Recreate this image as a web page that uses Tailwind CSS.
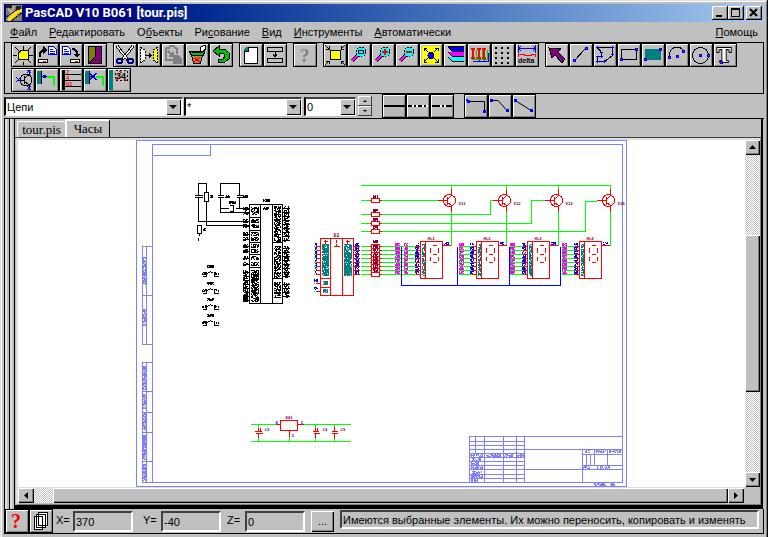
<!DOCTYPE html>
<html lang="ru">
<head>
<meta charset="utf-8">
<title>PasCAD V10 B061 [tour.pis]</title>
<script src="https://cdn.jsdelivr.net/npm/@tailwindcss/browser@4"></script>
</head>
<body class="bg-[#c0c0c0] text-black">
<div class="min-h-screen flex flex-col bg-[#c0c0c0] p-1 pb-[5px] font-['Liberation_Sans',Arial,sans-serif] text-[11px] shadow-[inset_-1px_-1px_0_#000,inset_1px_1px_0_#dfdfdf,inset_-2px_-2px_0_#808080,inset_2px_2px_0_#fff]">

  <!-- Title bar -->
  <header class="flex items-center h-[18px] pl-[2px] pr-[2px] bg-linear-to-r from-[#000080] from-15% to-[#a6caf0] text-white">
    <svg class="size-4 shrink-0" viewBox="0 0 16 16" shape-rendering="crispEdges"><rect width="16" height="16" fill="#808060"/><path d="M0 0h6v3H0zM10 1h5v4h-5z" fill="#222"/><path d="M2 4l10 9M8 1L3 14" stroke="#b0b0b0" stroke-width="2"/><path d="M0 15L11 5l5-1v3l-4 1-8 8z" fill="#ffe000"/><path d="M0 12L14 3M5 16l11-8" stroke="#222"/></svg>
    <h1 class="ml-[3px] font-bold text-[13px] leading-4 font-['Roboto','Liberation_Sans',sans-serif]">PasCAD V10 B061 [tour.pis]</h1>
    <div class="ml-auto flex *:w-4 *:h-[14px] *:bg-[#c0c0c0] *:shadow-[inset_-1px_-1px_0_#000,inset_1px_1px_0_#fff,inset_-2px_-2px_0_#808080]">
      <button aria-label="Свернуть"><svg viewBox="0 0 16 14" shape-rendering="crispEdges"><path d="M4 9h6v2H4z"/></svg></button>
      <button aria-label="Развернуть"><svg viewBox="0 0 16 14" shape-rendering="crispEdges"><path d="M3 2h9v9H3zM4 4v6h7V4z" fill-rule="evenodd"/></svg></button>
      <button aria-label="Закрыть" class="ml-[2px]"><svg viewBox="0 0 16 14"><path d="M4 3l7 7M11 3l-7 7" stroke="#000" stroke-width="2"/></svg></button>
    </div>
  </header>

  <!-- Menu -->
  <nav class="flex h-5 items-center gap-3 px-[6px] leading-5">
    <a href="#"><u>Ф</u>айл</a>
    <a href="#"><u>Р</u>едактировать</a>
    <a href="#">О<u>б</u>ъекты</a>
    <a href="#">Ри<u>с</u>ование</a>
    <a href="#"><u>В</u>ид</a>
    <a href="#"><u>И</u>нструменты</a>
    <a href="#"><u>А</u>втоматически</a>
    <a href="#" class="ml-auto"><u>П</u>омощь</a>
  </nav>

  <!-- Toolbars -->
  <div class="border border-black pl-[6px] pb-px min-h-[51px] flex flex-col gap-px [&_button]:block [&_button]:size-6 [&_button]:border [&_button]:border-black [&_button]:shadow-[inset_1px_1px_0_#fff,inset_-1px_-1px_0_#808080] [&_svg]:size-[22px] [&_svg]:[shape-rendering:crispEdges]">
    <div class="flex flex-wrap gap-x-[6px]">
      <div class="flex">
        <button aria-label="Новый"><svg viewBox="1 1 22 22"><path d="M12 3v4M12 19v3M2 12h4M18 12h4M4 4l4 4M20 4l-3 3M4 20l3-3M20 20l-3-3" stroke="#000"/><path d="M10 7.500h7v9H7.500V10z" fill="#ff0" stroke="#000"/></svg></button>
        <button aria-label="Открыть"><svg viewBox="1 1 22 22"><path d="M5 14V10L8 7h2" fill="none" stroke="#000" stroke-width="2"/><path d="M8 3l4 4-4 4z"/><path d="M13.500 3.500h5l3 3v5h-8z" fill="#fff" stroke="#00f"/><path d="M15 6.500h3M15 8.500h5M15 10.500h5" stroke="#00f"/><path d="M3.500 16.500h9v3h-9z" fill="#fff" stroke="#000"/><path d="M8 18.500h3" stroke="red" stroke-width="1"/></svg></button>
        <button aria-label="Сохранить"><svg viewBox="1 1 22 22"><path d="M3.500 3.500h5l3 3v5h-8z" fill="#fff" stroke="#00f"/><path d="M5 6.500h3M5 8.500h5M5 10.500h5" stroke="#00f"/><path d="M13 6h2l3 3v3" fill="none" stroke="#000" stroke-width="2"/><path d="M14 11h7l-3 4z"/><path d="M11.500 16.500h9v3h-9z" fill="#fff" stroke="#000"/><path d="M16 18.500h3" stroke="red" stroke-width="1"/></svg></button>
        <button aria-label="Выход"><svg viewBox="1 1 22 22"><path d="M5.500 3.500h13v17h-13z" fill="#800080" stroke="#000"/><path d="M6 4h6v10l-6 6z" fill="#808000"/><path d="M12 4v10l-6 6" fill="none" stroke="#000"/></svg></button>
      </div>
      <div class="flex">
        <button aria-label="Вырезать"><svg viewBox="1 1 22 22"><path d="M4 3l11 14M20 3L9 17" stroke="#000" stroke-width="3"/><path d="M4 3l10 13M20 3L10 16" stroke="#fff" stroke-width="1.200"/><circle cx="6.500" cy="18" r="2.500" fill="none" stroke="#000080" stroke-width="2"/><circle cx="17.500" cy="18" r="2.500" fill="none" stroke="#000080" stroke-width="2"/></svg></button>
        <button aria-label="Зеркально"><svg viewBox="1 1 22 22"><path d="M3.500 4.500L8 7v10l-4.500 3z" fill="#fff" stroke="#000" stroke-dasharray="2 1"/><path d="M20.500 4.500L16 7v10l4.500 3z" fill="#ff0" stroke="#000" stroke-dasharray="2 1"/><path d="M9 12.500h4" stroke="#000"/><path d="M12 10l3 2.500-3 2.500z"/></svg></button>
        <button aria-label="Вставить"><svg viewBox="1 1 22 22"><path d="M5 5v12h7M16 5v6M5 5h3l1-2h4l1 2h2" fill="none" stroke="#808080" stroke-width="2"/><path d="M12 12h5l4 4v5h-9z" fill="#808080"/><path d="M7 8l5 5M12 9v4H8" stroke="#808080" stroke-width="1.500" fill="none"/></svg></button>
        <button aria-label="Удалить"><svg viewBox="1 1 22 22"><path d="M6.500 12h11l-2 8h-7z" fill="#c08040" stroke="#000"/><path d="M9 15l6 4M15 14l-6 5" stroke="red"/><path d="M4.500 8.500h15l-1 4h-12z" fill="#00c000" stroke="#000"/><path d="M7 9h10" stroke="#000" stroke-width="2"/><path d="M15 7l1-3 4-2 1 4-4 3z" fill="#fff" stroke="#000"/></svg></button>
        <button aria-label="Отменить"><svg viewBox="1 1 22 22"><path d="M4 8l6-5v3h6l4 4v6l-4 3H9v-3h5l2-3-1-2-2-1h-3v3z" fill="#00c000" stroke="#000"/></svg></button>
      </div>
      <div class="flex">
        <button aria-label="Лист"><svg viewBox="1 1 22 22"><path d="M9 4.500h9.500v16h-13V8z" fill="#fff" stroke="#000"/><path d="M5 8V6l3-2h2v4z" fill="#008080"/><path d="M5 8.500h4.500V4" fill="none" stroke="#000"/></svg></button>
        <button aria-label="Разместить"><svg viewBox="1 1 22 22" fill="none" stroke="#000"><path d="M4.500 4.500h15v4h-15zM4.500 15.500h15v4h-15zM12 9v5M10 11.500l2 2 2-2"/></svg></button>
      </div>
      <button aria-label="Справка"><svg viewBox="1 1 22 22"><text x="7" y="19" font-family="Liberation Serif" font-weight="bold" font-size="19" fill="#808080">?</text></svg></button>
      <div class="flex">
        <button aria-label="Выделить область"><svg viewBox="1 1 22 22"><path d="M7.500 7.500h10v9h-10z" fill="#ff0" stroke="#000"/><path d="M2 2l4 4M22 2l-4 4M2 22l4-4M22 22l-4-4M6 3v3H3M18 3v3h3M3 18h3v3M21 18h-3v3" stroke="#000" fill="none"/></svg></button>
        <button aria-label="Масштаб окном"><svg viewBox="1 1 22 22"><path d="M5 18l5-5" stroke="#000" stroke-width="4"/><path d="M5 18l5-5" stroke="#f0f" stroke-width="2.500"/><circle cx="14" cy="9" r="5" fill="#0ff" stroke="#000" stroke-dasharray="2 1"/><path d="M11.500 7.500h5v3h-5z" fill="none" stroke="#000"/></svg></button>
        <button aria-label="Увеличить"><svg viewBox="1 1 22 22"><path d="M5 18l5-5" stroke="#000" stroke-width="4"/><path d="M5 18l5-5" stroke="#f0f" stroke-width="2.500"/><circle cx="14" cy="9" r="5" fill="#0ff" stroke="#000" stroke-dasharray="2 1"/><path d="M11 9h6M14 6v6" stroke="red" stroke-width="2"/></svg></button>
        <button aria-label="Уменьшить"><svg viewBox="1 1 22 22"><path d="M5 18l5-5" stroke="#000" stroke-width="4"/><path d="M5 18l5-5" stroke="#f0f" stroke-width="2.500"/><circle cx="14" cy="9" r="5" fill="#0ff" stroke="#000" stroke-dasharray="2 1"/><path d="M11 9h6" stroke="red" stroke-width="2"/></svg></button>
        <button aria-label="Показать всё"><svg viewBox="1 1 22 22"><path d="M3 3h18v18H3z" fill="#ff0"/><circle cx="12" cy="12.500" r="3" fill="#00f" stroke="#000080"/><path d="M5 5l4 4M19 5l-4 4M5 19l4-4M19 19l-4-4M5 8V5h3M16 5h3v3M5 16v3h3M16 19h3v-3" stroke="#000" fill="none"/></svg></button>
        <button aria-label="Слои"><svg viewBox="1 1 22 22"><path d="M5 2h16v2H6z" fill="#ff0"/><path d="M5 4h16v4H9z" fill="#00f"/><path d="M5 9h16v4H9z" fill="#f0f"/><path d="M5 14h16v4H9z" fill="#0ff"/><path d="M5 3.500h16M9 8.500h12M9 13.500h12M9 18.500h12M5 4l4 4M5 9l4 4M5 14l4 4" stroke="#000"/></svg></button>
        <button aria-label="Шины"><svg viewBox="1 1 22 22" stroke-width="2" fill="none"><path d="M12 10v9M17 10v9M21 10v9M6 18.500h16" stroke="#00f" stroke-width="1"/><path d="M9 7v9M15 7v9M20 7v9M5 16.500h16" stroke="#0c0" stroke-width="1"/><path d="M6 5v9M12 5v9M17 5v9M4 5.500h4M10 5.500h4M15 5.500h4M4 14.500h4M10 14.500h4M15 14.500h4" stroke="red"/></svg></button>
        <button aria-label="Сетка"><svg viewBox="1 1 22 22"><path d="M4 5h18M4 10h18M4 15h18M4 20h18" stroke="#000" stroke-width="2" stroke-dasharray="2 4"/></svg></button>
        <button aria-label="Допуск"><svg viewBox="1 1 22 22"><path d="M3.500 2v8M20.500 2v8M3 5.500h18M6 3L4 5.500 6 8M18 3l2 2.500L18 8" stroke="#00f" fill="none"/><path d="M3 11.500h6l1 1h6l1-1h4M3.500 11v3M20.500 11v3" stroke="red" fill="none"/><text x="3" y="20" font-family="Liberation Sans" font-weight="bold" font-size="7">delta</text></svg></button>
      </div>
      <div class="flex">
        <button aria-label="Указатель" aria-pressed="true" class="bg-[#c8c8c8]"><svg viewBox="1 1 22 22"><path d="M4 5l12 1-3 3 7 7-3 4-7-8-3 3z" fill="#800080" stroke="#000"/></svg></button>
        <button aria-label="Линия"><svg viewBox="1 1 22 22"><path d="M5 18L17 5" stroke="#000"/><path d="M4.500 16.500h2v2h-2zM16.500 4.500h2v2h-2z" fill="red" stroke="#00f"/></svg></button>
        <button aria-label="Полигон"><svg viewBox="1 1 22 22"><path d="M4.500 4.500h15v8l-8 6h-7v-5h4v-4z" fill="none" stroke="#000"/><path d="M3 4.500h3M4.500 3v3M18 4.500h3M19.500 3v3M18 11.500h3M19.500 10v3M3 13.500h3M7 13.500h3M8.500 12v3M7 9.500h3M3 18.500h3M4.500 17v3M10 18.500h3M11.500 17v3" stroke="#00f"/></svg></button>
        <button aria-label="Прямоугольник"><svg viewBox="1 1 22 22"><path d="M4.500 6.500h15v10h-15z" fill="none" stroke="#000"/><path d="M3.500 15.500h2v2h-2zM18.500 5.500h2v2h-2z" fill="red" stroke="#00f"/></svg></button>
        <button aria-label="Залитый прямоугольник"><svg viewBox="1 1 22 22"><path d="M4 6h16v11H4z" fill="#008080"/><path d="M3.500 15.500h2v2h-2zM18.500 5.500h2v2h-2z" fill="red" stroke="#00f"/></svg></button>
        <button aria-label="Дуга"><svg viewBox="1 1 22 22"><path d="M4 14c0-12 12-12 14-6" fill="none" stroke="#000"/><path d="M3.500 13.500h2v2h-2zM11.500 12.500h2v2h-2zM17.500 7.500h2v2h-2z" fill="red" stroke="#00f"/></svg></button>
        <button aria-label="Окружность"><svg viewBox="1 1 22 22"><circle cx="11.500" cy="12.500" r="8" fill="none" stroke="#000"/><path d="M10.500 11.500h2v2h-2zM18.500 11.500h2v2h-2z" fill="red" stroke="#00f"/></svg></button>
        <button aria-label="Текст"><svg viewBox="1 1 22 22"><text x="4" y="19" font-family="Liberation Serif" font-weight="bold" font-size="21" fill="#fff" stroke="#000" paint-order="stroke" stroke-width="2">T</text><path d="M7.500 18.500h2v2h-2z" fill="red" stroke="#00f"/></svg></button>
      </div>
    </div>
    <div class="flex">
      <button aria-label="Компонент"><svg viewBox="1 1 22 22"><circle cx="15" cy="12" r="6" fill="none" stroke="#000"/><path d="M6 12h7M13 8v8M13.500 8v8M13 10l5-3V2M13 13l5 4v5" stroke="#000" fill="none"/><path d="M5 9l5 5M10 9l-5 5M16 2l4 3M20 2l-4 3M16 18l4 4M20 18l-4 4" stroke="#00f"/></svg></button>
      <button aria-label="Соединить вывод"><svg viewBox="1 1 22 22"><path d="M2 3h4v13H2z" fill="#008080"/><path d="M6.500 3v13M6 8.500h6" stroke="#000"/><path d="M8 7h3v3H8z" fill="#00f"/><path d="M12 9h7v9" fill="none" stroke="#0f0" stroke-width="2"/></svg></button>
      <button aria-label="Номера"><svg viewBox="1 1 22 22"><path d="M3 2h3v20H3zM6 6h16v1H6zM6 12h16v1H6zM6 18h16v1H6z"/><g fill="red" font-family="Liberation Sans" font-weight="bold" font-size="6"><text x="7" y="6">7</text><text x="7" y="12">4</text><text x="7" y="18">01</text></g></svg></button>
      <button aria-label="Разорвать"><svg viewBox="1 1 22 22"><path d="M2 3h4v13H2z" fill="#008080"/><path d="M6.500 3v13M6 8.500h6" stroke="#000"/><path d="M7 5l6 7M13 5l-6 7" stroke="#00f" stroke-width="1.500"/><path d="M13 9h7v9" fill="none" stroke="#0f0" stroke-width="2"/></svg></button>
      <button aria-label="Перенумеровать"><svg viewBox="1 1 22 22"><path d="M2 2h4v20H2z" fill="#008080"/><text x="9" y="11" font-family="Liberation Sans" font-weight="bold" font-size="9">34</text><path d="M8.500 2.500h12v10h-12z" fill="none" stroke="#000" stroke-dasharray="2 2"/><path d="M12 3l3 2M17 11l3 2M8 10l3 2" stroke="red"/></svg></button>
    </div>
  </div>

  <!-- Object, layer and line controls -->
  <div class="flex h-6 [&_select]:appearance-none [&_select]:w-full [&_select]:h-[19px] [&_select]:bg-white [&_select]:border-t-2 [&_select]:border-l-2 [&_select]:border-t-[#404040] [&_select]:border-l-black [&_select]:border-b [&_select]:border-r [&_select]:border-white [&_select]:pl-px [&_select]:leading-4">
    <label class="relative flex-none w-[179px] mt-[3px]" aria-label="Тип объекта"><select><option>Цепи</option></select>
      <svg class="absolute right-[2px] top-[2px] w-[15px] h-4 bg-[#c0c0c0] pointer-events-none shadow-[inset_1px_1px_0_#fff,inset_-1px_-1px_0_#000]" viewBox="0 0 15 16"><path d="M3 6h8l-4 4z"/></svg></label>
    <label class="relative flex-none w-[118px] mt-[3px] ml-px" aria-label="Имя"><select><option>*</option></select>
      <svg class="absolute right-px top-[2px] w-[15px] h-4 bg-[#c0c0c0] pointer-events-none shadow-[inset_1px_1px_0_#fff,inset_-1px_-1px_0_#000]" viewBox="0 0 15 16"><path d="M3 6h8l-4 4z"/></svg></label>
    <label class="relative flex-none w-[52px] mt-[3px] ml-[2px]" aria-label="Толщина"><select><option>0</option></select>
      <svg class="absolute right-px top-[2px] w-[15px] h-4 bg-[#c0c0c0] pointer-events-none shadow-[inset_1px_1px_0_#fff,inset_-1px_-1px_0_#000]" viewBox="0 0 15 16"><path d="M3 6h8l-4 4z"/></svg></label>
    <div class="mt-[2px] ml-[2px] w-[14px] flex flex-col *:h-[10px] *:bg-[#c0c0c0] *:shadow-[inset_-1px_-1px_0_#404040,inset_1px_1px_0_#fff]">
      <button aria-label="Больше"><svg class="w-[14px] h-[10px]" viewBox="0 0 14 10"><path d="M5 6h4L7 4z"/></svg></button>
      <button aria-label="Меньше"><svg class="w-[14px] h-[10px]" viewBox="0 0 14 10"><path d="M5 4h4L7 6z"/></svg></button>
    </div>
    <div class="flex ml-[10px] *:size-6 *:border *:border-black *:shadow-[inset_1px_1px_0_#fff,inset_-1px_-1px_0_#808080] [&_svg]:size-[22px]">
      <button aria-label="Сплошная" aria-pressed="true" class="bg-[#b8b8b8]"><svg viewBox="1 1 22 22"><path d="M2 11h21v2H2z"/></svg></button>
      <button aria-label="Пунктирная"><svg viewBox="1 1 22 22" shape-rendering="crispEdges"><path d="M2 12h20" stroke="#fff" stroke-width="2"/><path d="M2 12h20" stroke="#000" stroke-width="2" stroke-dasharray="4 2 2 2"/></svg></button>
      <button aria-label="Штриховая"><svg viewBox="1 1 22 22" shape-rendering="crispEdges"><path d="M2 12h20" stroke="#fff" stroke-width="2"/><path d="M2 12h8M12 12h2M16 12h6" stroke="#000" stroke-width="2"/></svg></button>
    </div>
    <div class="flex ml-[10px] *:size-6 *:border *:border-black *:shadow-[inset_1px_1px_0_#fff,inset_-1px_-1px_0_#808080] [&_svg]:size-[22px]">
      <button aria-label="Под прямым углом" aria-pressed="true" class="bg-[#b8b8b8]"><svg viewBox="1 1 22 22"><path d="M3 7.500h17.500V18" fill="none" stroke="#000"/><path d="M2 5h2v2H2zM4 6h2v3H3V7zM19 16h3v3h-3z" fill="#00f"/></svg></button>
      <button aria-label="С изломом"><svg viewBox="1 1 22 22"><path d="M4 6.500h6l9 10" fill="none" stroke="#000"/><path d="M2 5h3v3H2zM18 15h3v3h-3z" fill="#00f"/></svg></button>
      <button aria-label="Прямая"><svg viewBox="1 1 22 22"><path d="M4 7l16 10" stroke="#000"/><path d="M2 5h3v3H2zM18 15h3v3h-3z" fill="#00f"/></svg></button>
    </div>
  </div>

  <!-- Document area -->
  <main class="flex-1 flex border-t border-l border-black">
    <div class="w-[5px] border-r border-r-black border-l-2 border-l-[#dfdfdf]"></div>
    <div class="w-[5px] border-r border-r-black border-l-2 border-l-[#dfdfdf]"></div>
    <div class="flex-1 min-w-0 flex flex-col border-r-2 border-b-4 border-black mr-px">
      <div class="flex items-end h-[19px] pl-[2px] border-b border-b-[#404040] font-['Liberation_Serif',serif] text-[13px] leading-4" role="tablist">
        <button role="tab" class="h-4 w-12 leading-4 border-t border-l border-white text-center rounded-t-xs">tour.pis</button>
        <button role="tab" aria-selected="true" class="self-end h-[18px] w-[45px] leading-4 border-t-2 border-l-2 border-white border-r border-r-black bg-[#c0c0c0] rounded-t-xs text-center">Часы</button>
      </div>
      <div class="flex-1 flex flex-col border-t-2 border-l-2 border-[#dfdfdf] border-r border-r-[#808080] border-b border-b-[#808080] ml-px">
        <div class="flex-1 flex">
          <div class="flex-1 min-w-0 bg-white overflow-hidden">
            <svg id="sheet" class="block w-[492px] h-[347px] mx-auto" viewBox="136 140 492 347" role="img" aria-label="Схема: Часы"></svg>
          </div>
          <div class="w-[15px] shrink-0 flex flex-col bg-[repeating-conic-gradient(#c0c0c0_0_25%,#fff_0_50%)] bg-size-[2px_2px] *:bg-[#c0c0c0] *:shadow-[inset_1px_1px_0_#fff,inset_-1px_-1px_0_#000,inset_-2px_-2px_0_#808080]">
            <button class="h-[15px]" aria-label="Вверх"><svg viewBox="0 0 15 15"><path d="M4 9h7L7.500 5z"/></svg></button>
            <div class="h-[45%] my-auto"></div>
            <button class="h-[15px]" aria-label="Вниз"><svg viewBox="0 0 15 15"><path d="M4 6h7l-3.500 4z"/></svg></button>
          </div>
        </div>
        <div class="flex h-4 border-t border-[#dfdfdf] mr-4 bg-[repeating-conic-gradient(#c0c0c0_0_25%,#fff_0_50%)] bg-size-[2px_2px] *:bg-[#c0c0c0] *:shadow-[inset_1px_1px_0_#fff,inset_-1px_-1px_0_#000,inset_-2px_-2px_0_#808080]">
          <button class="w-4" aria-label="Влево"><svg class="h-[15px]" viewBox="0 0 15 15"><path d="M10 4v7L6 7.500z"/></svg></button>
          <div class="ml-[19px] flex-1"></div>
          <button class="w-4" aria-label="Вправо"><svg class="h-[15px]" viewBox="0 0 15 15"><path d="M6 4v7l4-3.500z"/></svg></button>
        </div>
        <div class="h-px"></div>
      </div>
    </div>
  </main>

  <!-- Status bar -->
  <footer class="flex h-[25px] border-l border-r border-b border-black [&_input]:w-[60px] [&_input]:h-[21px] [&_input]:mt-[2px] [&_input]:border-2 [&_input]:border-t-[#404040] [&_input]:border-l-[#404040] [&_input]:border-r-white [&_input]:border-b-white [&_input]:pl-px [&_label]:leading-[22px]">
    <button aria-label="Помощь" class="size-6 shrink-0 border border-black shadow-[inset_1px_1px_0_#fff,inset_-1px_-1px_0_#808080]"><svg viewBox="1 1 22 22"><text x="6" y="19" font-family="Liberation Serif" font-weight="bold" font-size="20" fill="red">?</text></svg></button>
    <button aria-label="Копии" class="size-6 shrink-0 border border-black shadow-[inset_1px_1px_0_#fff,inset_-1px_-1px_0_#808080]"><svg viewBox="1 1 22 22" shape-rendering="crispEdges"><path d="M9.500 3.500h9v13h-9zM7.500 5.500h9v13h-9zM5.500 7.500h8v13h-8z" fill="#fff" stroke="#000"/></svg></button>
    <label for="cx" class="ml-[3px] w-[17px]">X=</label><input id="cx" value="370">
    <label for="cy" class="ml-[10px] w-[18px]">Y=</label><input id="cy" value="-40">
    <label for="cz" class="ml-[6px] w-[18px]">Z=</label><input id="cz" value="0">
    <button class="ml-[6px] mt-[2px] w-[23px] h-[21px] shrink-0 shadow-[inset_1px_1px_0_#fff,inset_-1px_-1px_0_#000,inset_-2px_-2px_0_#808080]">...</button>
    <output class="ml-[6px] mr-[4px] mt-px flex-1 min-w-0 h-[19px] leading-4 pl-px whitespace-nowrap overflow-hidden border-2 border-t-[#404040] border-l-[#404040] border-r-white border-b-white">Имеются выбранные элементы. Их можно переносить, копировать и изменять</output>
  </footer>
</div>

<script>
const out = [];
const path = (c, d, f = 'none') => out.push(`<path d="${d}" stroke="${c}" fill="${f}"/>`);
const text = (c, x, y, s, size = 5) => out.push(`<text x="${x}" y="${y}" fill="${c}" font-size="${size}">${s}</text>`);
const FRAME = '#8080ff', WIRE = '#00ff00', PART = '#ff0000', BUS = '#0000ff', NAME = '#800040', TEAL = '#008080', NET = '#ff00ff', K = '#000';

// Pin marks too small to read at this zoom: a block of speckles, the same on every draw
let seed = 7;
const speckle = (c, x, y, w, h, density = 0.68) => {
  let d = '';
  for (let r = 0; r < h; r++) for (let i = 0; i < w; i++) {
    seed = (seed * 48271) % 2147483647;
    if (seed / 2147483647 < density) d += `M${x + i} ${y + r}h1v1h-1z`;
  }
  out.push(`<path d="${d}" fill="${c}" transform="translate(-.5 -.5)"/>`);
};

// Sheet frame and side columns
path(FRAME, 'M136 140H626V486H136ZM152 144H622V482H152ZM152 155H210V144M152 246H142V344H152M146 246V344M142 295H152M152 362H142V482H152M146 362V482M142 391H152M142 412H152M142 432H152M142 461H152');
[[257, 28], [309, 17], [366, 24], [394, 15], [413, 18], [435, 25], [464, 17]].forEach(([y, h]) => speckle(FRAME, 143, y, 3, h, 0.75));

// Title block
path(FRAME, 'M622 436H469V482M469 441H524M469 445H524M469 449H622M469 453H524M469 457H524M469 461H524M469 465H524M469 469H582M469 474H524M469 478H524M475 436V453M484 436V482M503 436V482M516 436V482M524 436V482M582 449V482M582 454H622M582 465H622M582 469H622M586 454V465M590 454V465M594 449V465M607 449V465M597 465V469');
[[470, 454, 13], [486, 454, 15], [504, 454, 9], [517, 454, 7], [472, 458, 9], [471, 462, 8], [471, 466, 12], [472, 471, 10], [471, 475, 12], [471, 479, 7], [585, 450, 5], [596, 450, 10], [609, 450, 12], [583, 466, 7], [599, 466, 11], [594, 483, 12], [610, 483, 5]]
  .forEach(([x, y, w]) => speckle(FRAME, x, y, w, 3));

// Microcontroller with clock and reset parts
path(K, 'M249 204H282V303H249ZM260 204V303M272 204V303M249 217H260M249 230H260M249 242H260M249 254H260M249 267H260M272 242H282M272 278H282');
path(K, 'M198 191V183H206V191M194 195H202M194 197H202M198 191V195M198 197V221H249M206 201V225H249M204 192H208V201H204ZM220 195V183H239V195M217 195H223M217 197H223M236 195H242M236 197H242M220 197V212H249M239 197V208M220 208H228M235 208H249M229 205H233V211H229M197 225H201V233H197ZM199 233V235M198 237V240');
[[263, 199, 7], [263, 207, 6], [210, 195, 3], [225, 195, 5], [243, 195, 5], [229, 201, 7], [202, 228, 4]].forEach(([x, y, w]) => speckle(K, x, y, w, 3, 0.8));
for (let y = 206; y < 302; y += 4) if (y !== 242 && y !== 278 && y < 298) {
  speckle(K, 274, y, 7, 4); speckle(K, 284, y, 5, 4, 0.6); path(K, `M282 ${y + 2}H289`);
}
[207, 211, 219, 224, 232, 237, 244, 249, 256, 262, 270, 274, 278, 282, 286, 290, 294, 298].forEach(y => {
  speckle(K, 251, y, 8, 4); speckle(K, 243, y, 5, 4); path(K, `M243 ${y + 2}H249`);
});
[266, 283, 299, 315].forEach(y => {
  speckle(K, 207, y - 1, 7, 3, 0.85);
  path(K, `M202 ${y + 10}H206V${y + 5}M202 ${y + 6}V${y + 8}M207 ${y + 7}L210 ${y + 5}L213 ${y + 7}M214 ${y + 5}V${y + 10}H218M218 ${y + 6}V${y + 8}`);
  speckle(K, 203, y + 6, 3, 3); speckle(K, 214, y + 6, 3, 3);
});

// Register DD2
const pins = [246, 250, 254, 258, 262, 266, 270, 274];
text(NAME, 333, 236, 'D2', 5);
path(PART, 'M320 238H353V295H320ZM330 238V295M342 238V295M320 278H330M320 287H330M325 239V243M323 241H327M336 239V242M333 246H339M336 243V246M347 239V243M345 241H349');
pins.forEach(y => {
  speckle(BUS, 315, y - 3, 2, 3); speckle(BUS, 355, y - 3, 4, 3, 0.75);
  speckle(TEAL, 322, y - 2, 7, 4, 0.85); speckle(TEAL, 344, y - 2, 8, 4, 0.85);
  path(PART, `M315 ${y}H320M353 ${y}H359M415 ${y}H420`);
  path(WIRE, `M313 ${y}H314M360 ${y}H371M381 ${y}H415`);
});
[283, 291].forEach(y => { path(PART, `M315 ${y}H320`); path(WIRE, `M313 ${y}H314`); speckle(BUS, 314, y - 4, 4, 3); speckle(TEAL, 323, y - 2, 5, 4, 0.9); });

// Resistors and transistor base wires
path(WIRE, 'M360 185H610M360 200H437M360 214H490V200H493M360 223H531V200H545M360 231H585V201H596');
[[200, 195], [214, 209], [223, 218], [231, 226]].forEach(([y, t]) => { path(PART, `M371 ${y - 2}H379V${y + 2}H371ZM379 ${y}H381M369 ${y}H371`, '#fff'); speckle(NAME, 373, t, 5, 3, 0.9); });
pins.forEach((y, i) => {
  path(PART, `M371 ${y - 2}H379V${y + 2}H371ZM379 ${y}H381M369 ${y}H371`, '#fff');
  if (i < 7) speckle(NAME, 373, y - 1, 5, 3, 0.85);
});
speckle(NAME, 373, 240, 5, 3, 0.9);

// Transistors
[449, 504, 556, 608].forEach((x, i) => {
  path(WIRE, `M${x + 2} 185V188M${x + 2} 211V245H${x + 1}`);
  out.push(`<circle cx="${x}" cy="200" r="6" fill="none" stroke="${PART}"/>`);
  path(PART, `M${x - 12} 200H${x - 2}M${x - 2} 196V204M${x + 2} 188V195L${x - 2} 199M${x - 2} 202L${x + 2} 205V211`);
  text(NAME, x + 9, 204, 'V1' + (i + 1), 4);
});

// Seven-segment indicators
[[420, 415], [476, 470], [527, 522], [579, 574]].forEach(([x, n], i) => {
  if (i) pins.forEach(y => { path(WIRE, `M${x - 18} ${y}H${x - 5}`); path(PART, `M${x - 5} ${y}H${x}`); });
  path(PART, `M${x} 241H${x + 22}V278H${x}ZM${x + 5} 241V278M${x + 12} 245H${x + 16}M${x + 10} 247V252M${x + 18} 247V252M${x + 12} 254H${x + 16}M${x + 10} 256V260M${x + 18} 256V260M${x + 12} 262H${x + 16}M${x + 22} 245H${x + 30}`);
  pins.forEach(y => {
    speckle(TEAL, x + 2, y - 2, 3, 4, 0.7);
    speckle(BUS, n, y - 3, 4, 3, 0.7);
    if (i) speckle(NET, x - 17, y - 3, 5, 3, 0.85); else { speckle(NET, 395, y - 3, 5, 3, 0.85); speckle(NET, 404, y - 3, 4, 3, 0.85); }
  });
  text(NAME, x + 7, 239, 'HL' + (i + 1), 4);
  speckle(BUS, x + 24, 242, 5, 3);
});
path(BUS, 'M401 246V285H560V246M457 246V285M509 246V285');

// Power supply
path(WIRE, 'M250 424H275M303 424H350M250 441H350M258 424V427M258 437V441M289 436V441M315 424V427M315 437V441M334 424V427M334 437V441');
path(PART, 'M280 420H297V430H280ZM275 424H280M297 424H303M289 430V436M258 427V431M254 431H261M255 433H262M258 433V437M260 427V430M315 427V431M312 431H318M313 433H319M315 433V437M317 427V430M334 426V431M331 431H337M331 433H337M334 433V438');
text(NAME, 285, 418, 'DA1', 4); text(NAME, 264, 430, 'C3', 4); text(NAME, 322, 430, 'C4', 4); text(NAME, 340, 430, 'C5', 4);
text(BUS, 275, 423, '8', 4); text(BUS, 300, 423, '1', 4); text(BUS, 291, 436, '2', 4);

document.getElementById('sheet').innerHTML =
  `<g transform="translate(.5 .5)" shape-rendering="crispEdges" font-family="DejaVu Sans Mono, monospace" font-weight="bold">${out.join('')}</g>`;
</script>
</body>
</html>
